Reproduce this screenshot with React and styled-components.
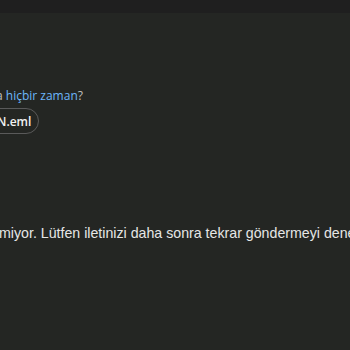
import React from 'react'
import styled, { createGlobalStyle } from 'styled-components'

const GlobalStyle = createGlobalStyle`
    html, body {
        margin: 0;
        padding: 0;
        background: #242623;
        overflow: hidden;
    }
`

const Page = styled.div`
    width: 350px;
    height: 350px;
    background: #242623;
    display: flex;
    flex-direction: column;
    overflow: hidden;
`

const TopBar = styled.div`
    height: 13px;
    flex-shrink: 0;
    background: #1f1f1f;
`

const Content = styled.div`
    display: flex;
    flex-direction: column;
    margin-left: -4px;
    padding-top: 75px;
`

const Question = styled.div`
    font-family: "Open Sans", "Noto Sans", sans-serif;
    font-size: 12px;
    line-height: 16px;
    color: #c0c0c0;
    white-space: nowrap;
`

const Link = styled.span`
    color: #6cb6fa;
`

const Chip = styled.div`
    align-self: flex-start;
    display: flex;
    align-items: center;
    height: 24px;
    margin-top: 4px;
    margin-left: -30px;
    padding: 0 7px 0 30px;
    border: 1px solid #5a5a5a;
    border-radius: 13px;
    font-family: "Open Sans", "Noto Sans", sans-serif;
    font-size: 12px;
    font-weight: 600;
    color: #f2f2f2;
`

const Message = styled.p`
    margin: 90px 0 0 3px;
    font-family: "Liberation Sans", Arial, sans-serif;
    font-size: 14.2px;
    line-height: 18px;
    color: #e6e6e6;
    white-space: nowrap;
`

function App() {
    return (
        <>
            <GlobalStyle />
            <Page>
                <TopBar />
                <Content>
                    <Question>
                        a <Link>hiçbir zaman</Link>?
                    </Question>
                    <Chip>N.eml</Chip>
                    <Message>
                        miyor. Lütfen iletinizi daha sonra tekrar göndermeyi deneyin.
                    </Message>
                </Content>
            </Page>
        </>
    )
}

export default App
